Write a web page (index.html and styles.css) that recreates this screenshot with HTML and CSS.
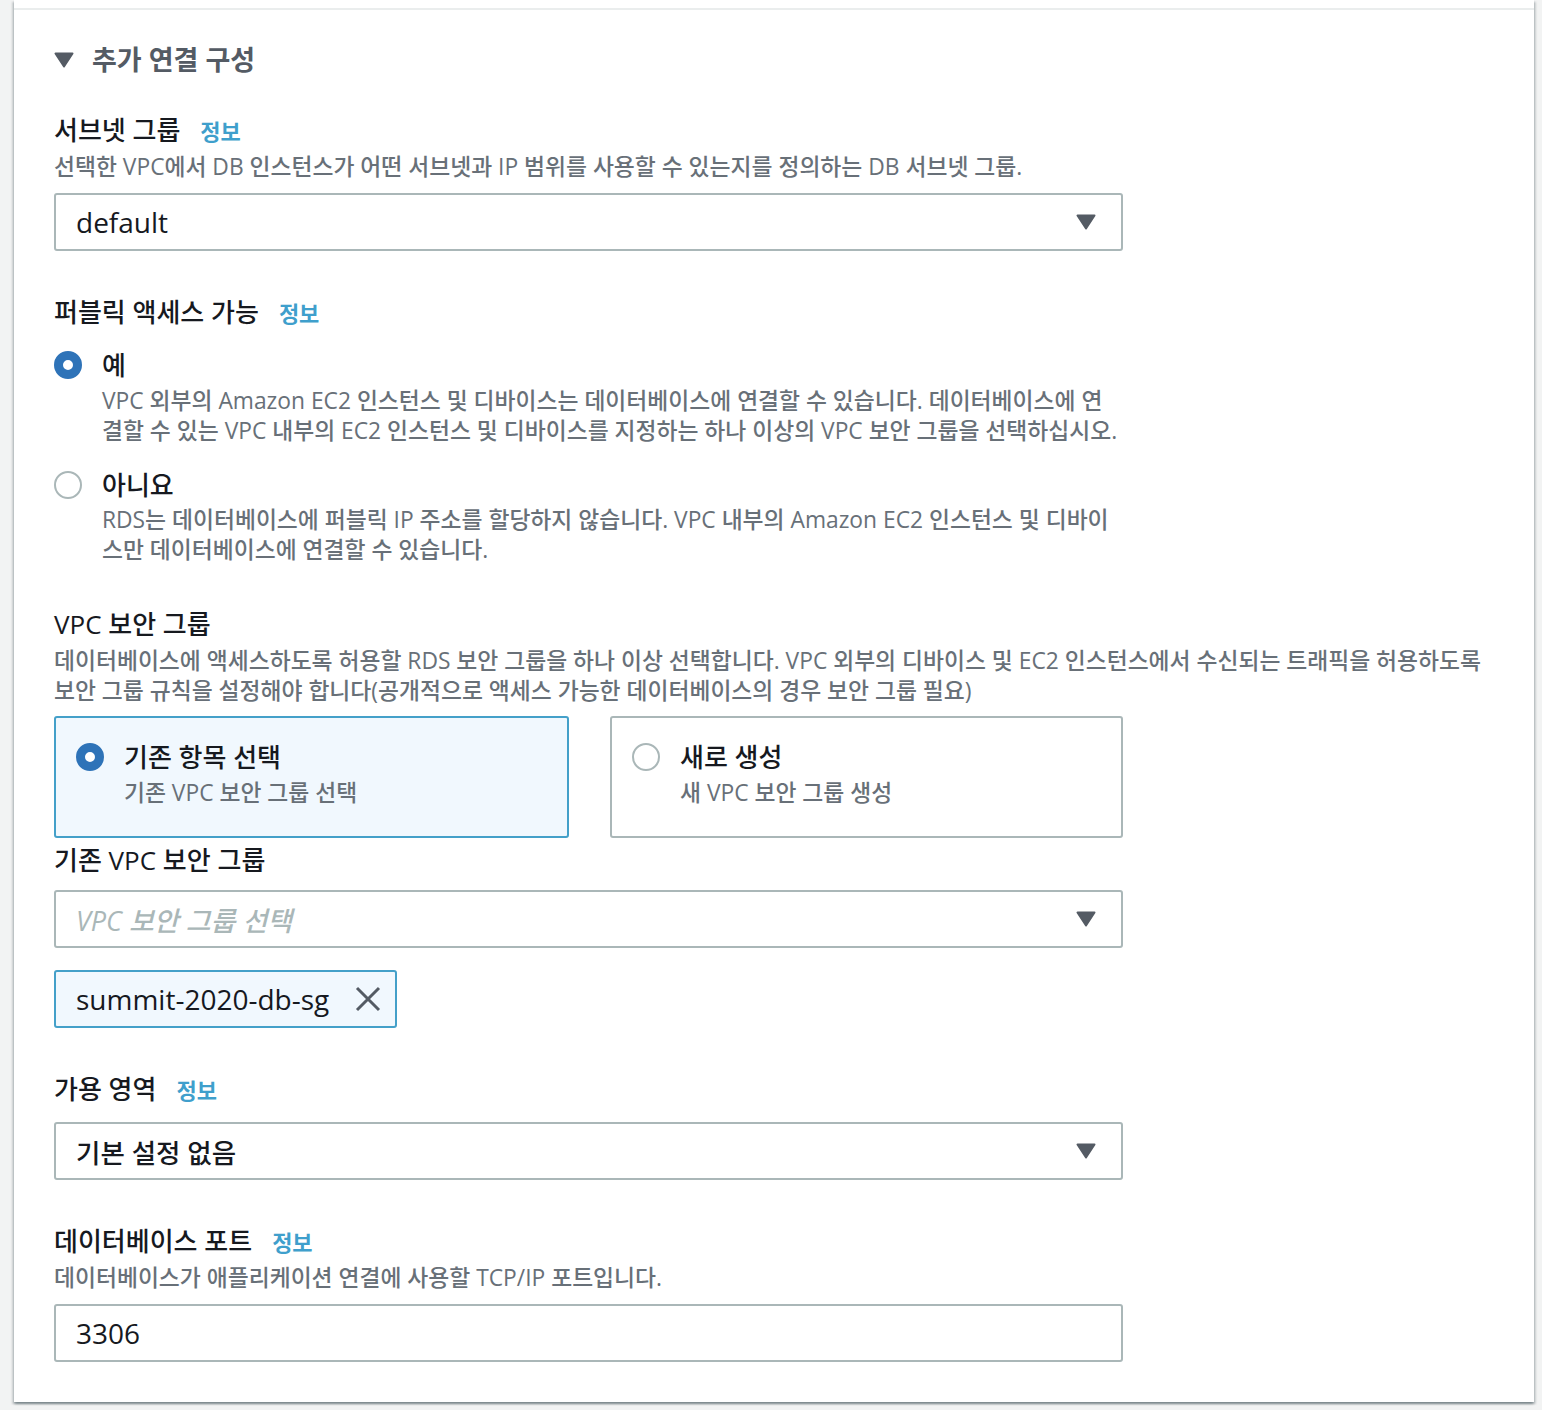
FILE: index.html
```html
<!DOCTYPE html>
<html lang="ko">
<head>
<meta charset="utf-8">
<title>추가 연결 구성</title>
<link rel="stylesheet" href="styles.css">
</head>
<body>
<div class="panel">
  <div class="panel-top"></div>
  <section class="section">
    <h2 class="expander">
      <svg class="expander-icon" width="20" height="16" viewBox="0 0 20 16"><path d="M1.5 1.5 H18.5 L10 14.5 Z" fill="#545b64" stroke="#545b64" stroke-width="2" stroke-linejoin="round"/></svg>
      <span>추가 연결 구성</span>
    </h2>

    <div class="field first">
      <div class="label-row"><span class="label">서브넷 그룹</span><a class="info">정보</a></div>
      <div class="desc">선택한 VPC에서 DB 인스턴스가 어떤 서브넷과 IP 범위를 사용할 수 있는지를 정의하는 DB 서브넷 그룹.</div>
      <div class="select control">
        <span class="value">default</span>
        <svg class="caret" width="20" height="16" viewBox="0 0 20 16"><path d="M1.5 1.5 H18.5 L10 14.5 Z" fill="#545b64" stroke="#545b64" stroke-width="2" stroke-linejoin="round"/></svg>
      </div>
    </div>

    <div class="field">
      <div class="label-row"><span class="label">퍼블릭 액세스 가능</span><a class="info">정보</a></div>
      <div class="radio-group">
        <div class="radio-item">
          <span class="radio checked"></span>
          <div class="radio-body">
            <div class="radio-label">예</div>
            <div class="radio-desc">VPC 외부의 Amazon EC2 인스턴스 및 디바이스는 데이터베이스에 연결할 수 있습니다. 데이터베이스에 연<br>결할 수 있는 VPC 내부의 EC2 인스턴스 및 디바이스를 지정하는 하나 이상의 VPC 보안 그룹을 선택하십시오.</div>
          </div>
        </div>
        <div class="radio-item second">
          <span class="radio"></span>
          <div class="radio-body">
            <div class="radio-label">아니요</div>
            <div class="radio-desc">RDS는 데이터베이스에 퍼블릭 IP 주소를 할당하지 않습니다. VPC 내부의 Amazon EC2 인스턴스 및 디바이<br>스만 데이터베이스에 연결할 수 있습니다.</div>
          </div>
        </div>
      </div>
    </div>

    <div class="field after-radios">
      <div class="label-row"><span class="label">VPC 보안 그룹</span></div>
      <div class="desc">데이터베이스에 액세스하도록 허용할 RDS 보안 그룹을 하나 이상 선택합니다. VPC 외부의 디바이스 및 EC2 인스턴스에서 수신되는 트래픽을 허용하도록<br>보안 그룹 규칙을 설정해야 합니다(공개적으로 액세스 가능한 데이터베이스의 경우 보안 그룹 필요)</div>
      <div class="tiles">
        <div class="tile selected">
          <span class="radio checked"></span>
          <div class="tile-body">
            <div class="tile-title">기존 항목 선택</div>
            <div class="tile-desc">기존 VPC 보안 그룹 선택</div>
          </div>
        </div>
        <div class="tile">
          <span class="radio"></span>
          <div class="tile-body">
            <div class="tile-title">새로 생성</div>
            <div class="tile-desc">새 VPC 보안 그룹 생성</div>
          </div>
        </div>
      </div>
      <div class="label-row sub"><span class="label">기존 VPC 보안 그룹</span></div>
      <div class="select control sub-control">
        <span class="placeholder">VPC 보안 그룹 선택</span>
        <svg class="caret" width="20" height="16" viewBox="0 0 20 16"><path d="M1.5 1.5 H18.5 L10 14.5 Z" fill="#545b64" stroke="#545b64" stroke-width="2" stroke-linejoin="round"/></svg>
      </div>
      <div class="token">
        <span class="token-text">summit-2020-db-sg</span>
        <svg class="token-x" width="26" height="26" viewBox="0 0 26 26"><path d="M2 2 L24 24 M24 2 L2 24" stroke="#545b64" stroke-width="3" stroke-linecap="butt" fill="none"/></svg>
      </div>
    </div>

    <div class="field">
      <div class="label-row"><span class="label">가용 영역</span><a class="info">정보</a></div>
      <div class="select control tight">
        <span class="value ko">기본 설정 없음</span>
        <svg class="caret" width="20" height="16" viewBox="0 0 20 16"><path d="M1.5 1.5 H18.5 L10 14.5 Z" fill="#545b64" stroke="#545b64" stroke-width="2" stroke-linejoin="round"/></svg>
      </div>
    </div>

    <div class="field">
      <div class="label-row"><span class="label">데이터베이스 포트</span><a class="info">정보</a></div>
      <div class="desc">데이터베이스가 애플리케이션 연결에 사용할 TCP/IP 포트입니다.</div>
      <div class="input control"><span class="value">3306</span></div>
    </div>
  </section>
</div>
</body>
</html>
```

FILE: styles.css
```css
* { box-sizing: border-box; }

html, body {
  margin: 0;
  padding: 0;
}

body {
  background: #f2f3f3;
  font-family: "Open Sans", "Noto Sans CJK KR", sans-serif;
  font-weight: 500;
  color: #16191f;
  height: 1410px;
  overflow: hidden;
}

.panel {
  margin-left: 14px;
  width: 1520px;
  background: #ffffff;
  box-shadow: 0 2px 2px rgba(0, 28, 36, 0.3), 2px 2px 2px rgba(0, 28, 36, 0.15), -2px 2px 2px rgba(0, 28, 36, 0.15);
}

.panel-top {
  height: 10px;
  border-bottom: 2px solid #eaeded;
}

.section {
  padding: 32px 40px 40px 40px;
}

.expander {
  margin: 0;
  display: flex;
  align-items: center;
  gap: 18px;
  font-size: 27px;
  line-height: 36px;
  font-weight: 700;
  color: #545b64;
}

.expander-icon { display: block; }

.field { margin-top: 46px; }
.field.first { margin-top: 37px; }
.field.after-radios { margin-top: 44px; }

.label-row {
  display: flex;
  align-items: baseline;
  gap: 20px;
  height: 30px;
  line-height: 30px;
}

.label {
  font-size: 26px;
  color: #16191f;
}

.info {
  font-size: 22px;
  font-weight: 700;
  color: #3f9fcc;
}

.desc {
  margin-top: 7px;
  font-size: 22.8px;
  line-height: 30px;
  color: #687078;
  white-space: nowrap;
}

.control {
  margin-top: 11px;
  width: 1069px;
  height: 58px;
  border: 2px solid #aab7b8;
  border-radius: 3px;
  padding: 0 25px 0 20px;
  display: flex;
  align-items: center;
  justify-content: space-between;
  font-size: 28px;
}

.control.tight { margin-top: 18px; }

.value { color: #16191f; }
.value.ko { font-size: 26.5px; }

.placeholder {
  color: #aab7b8;
  font-style: italic;
  font-size: 27px;
}

.caret { display: block; }

.radio-group { margin-top: 23px; }

.radio-item {
  display: flex;
  gap: 20px;
}

.radio-item.second { margin-top: 24px; }

.radio {
  flex: none;
  width: 28px;
  height: 28px;
  border-radius: 50%;
  border: 2px solid #aab7b8;
  background: #ffffff;
  margin-top: 1px;
}

.radio.checked {
  border: 9px solid #2e73b8;
}

.radio-label {
  font-size: 26px;
  line-height: 30px;
}

.radio-desc {
  margin-top: 6px;
  font-size: 22.8px;
  line-height: 30px;
  color: #687078;
  white-space: nowrap;
}

.radio-item.second .radio-desc { margin-top: 5px; }

.tiles {
  margin-top: 10px;
  width: 1069px;
  display: grid;
  grid-template-columns: 515px 513px;
  column-gap: 41px;
}

.tile {
  height: 122px;
  border: 2px solid #aab7b8;
  border-radius: 3px;
  padding: 24px 20px 0 20px;
  display: flex;
  gap: 20px;
}

.tile.selected {
  border-color: #44a0c9;
  background: #f1f8fe;
}

.tile-title {
  font-size: 26px;
  line-height: 30px;
}

.tile-desc {
  margin-top: 6px;
  font-size: 22.8px;
  line-height: 30px;
  color: #687078;
}

.label-row.sub { margin-top: 7px; }

.sub-control { margin-top: 15px; }

.token {
  margin-top: 22px;
  width: 343px;
  height: 58px;
  border: 2px solid #44a0c9;
  border-radius: 3px;
  background: #f1f8fe;
  padding: 0 14px 0 20px;
  display: flex;
  align-items: center;
  justify-content: space-between;
  font-size: 28px;
  color: #16191f;
}

.token-x { display: block; }
```
